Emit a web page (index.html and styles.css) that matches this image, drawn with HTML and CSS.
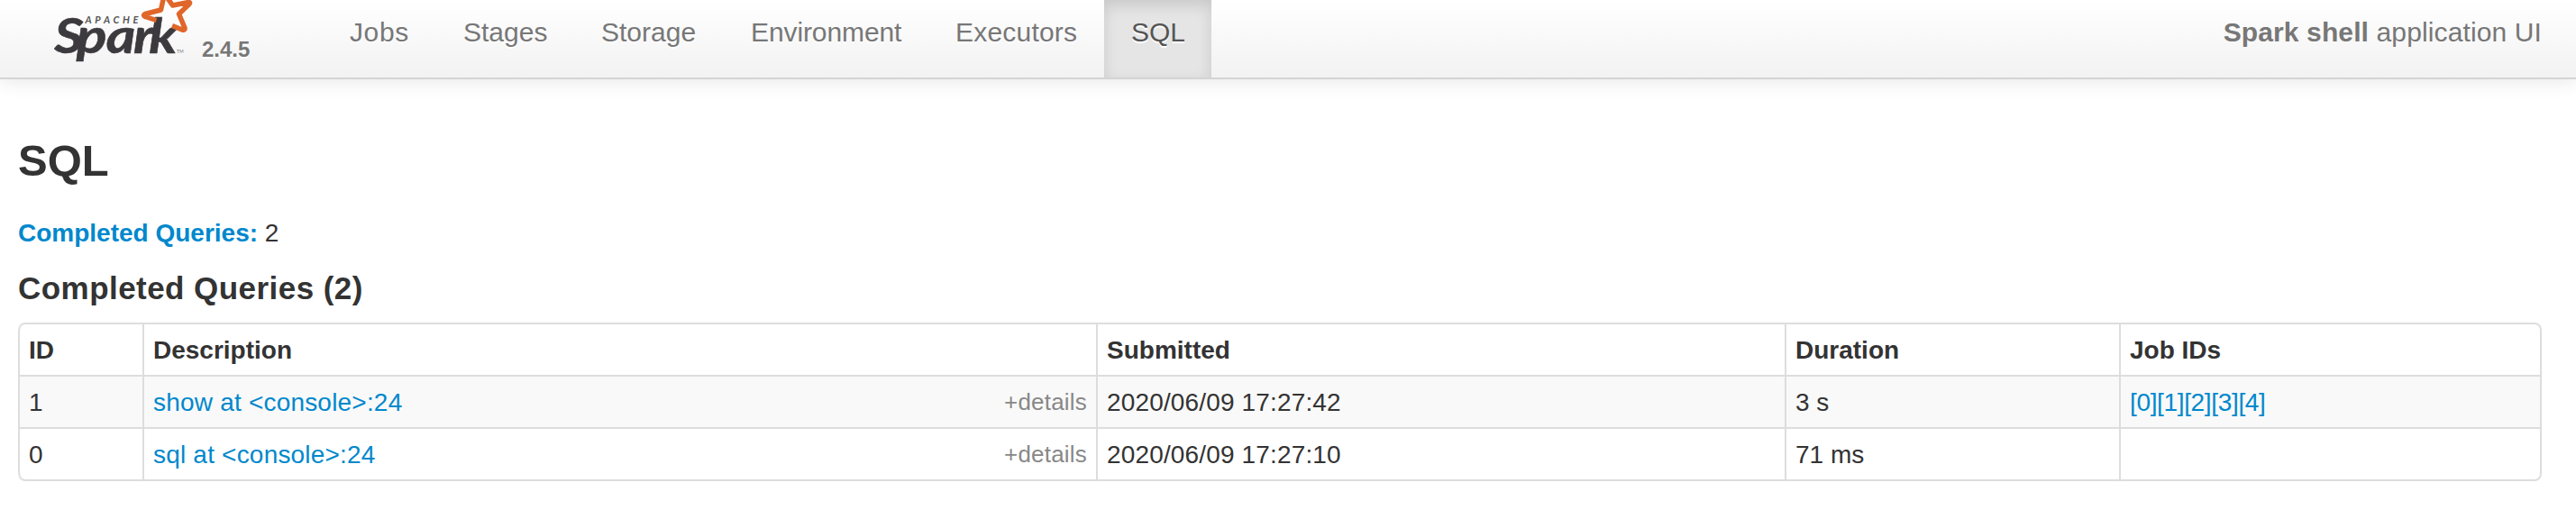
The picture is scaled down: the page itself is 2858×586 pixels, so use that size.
FILE: index.html
```html
<!DOCTYPE html>
<html lang="en">
<head>
  <meta charset="UTF-8">
  <title>Spark shell - SQL</title>
  <link rel="stylesheet" href="styles.css">
</head>
<body>
  <div class="navbar">
    <a class="brand" href="#">
      <svg class="logo" width="156" height="70" viewBox="60 0 156 70">
        <text class="logo-apache" x="94.5" y="26" textLength="59">APACHE</text>
        <text class="logo-spark" transform="scale(1.16 1)" x="52 73 101.500 127.500 142.500" y="59">Spark</text>
        <text class="logo-tm" x="196" y="58.5">TM</text>
        <path class="logo-star" d="M173.5 22.5 L161 18.500 Q158 17 161 15.500 L178.500 11 L182.500 -7 L191.500 6 L209 2.500 Q212 2.500 209.500 5 L198.500 15.500 L205 31 Q205.500 34 202 33 L191 28.500"/>
      </svg>
      <span class="version">2.4.5</span>
    </a>
    <ul class="nav">
      <li class="jobs"><a href="#">Jobs</a></li>
      <li class="stages"><a href="#">Stages</a></li>
      <li class="storage"><a href="#">Storage</a></li>
      <li class="environment"><a href="#">Environment</a></li>
      <li class="executors"><a href="#">Executors</a></li>
      <li class="sql active"><a href="#">SQL</a></li>
    </ul>
    <p class="navbar-text"><strong>Spark shell</strong> application UI</p>
  </div>

  <div class="container">
    <h3>SQL</h3>
    <p class="summary"><a href="#completed"><strong>Completed Queries:</strong></a> 2</p>
    <h4 id="completed">Completed Queries (2)</h4>
    <table class="table">
      <colgroup>
        <col class="col-id">
        <col class="col-description">
        <col class="col-submitted">
        <col class="col-duration">
        <col class="col-jobs">
      </colgroup>
      <thead>
        <tr>
          <th>ID</th>
          <th>Description</th>
          <th>Submitted</th>
          <th>Duration</th>
          <th>Job IDs</th>
        </tr>
      </thead>
      <tbody>
        <tr>
          <td>1</td>
          <td><div class="description"><a href="#">show at &lt;console&gt;:24</a><span class="details">+details</span></div></td>
          <td class="submitted">2020/06/09 17:27:42</td>
          <td>3 s</td>
          <td class="jobs-list"><a href="#">[0]</a><a href="#">[1]</a><a href="#">[2]</a><a href="#">[3]</a><a href="#">[4]</a></td>
        </tr>
        <tr>
          <td>0</td>
          <td><div class="description"><a href="#">sql at &lt;console&gt;:24</a><span class="details">+details</span></div></td>
          <td class="submitted">2020/06/09 17:27:10</td>
          <td>71 ms</td>
          <td></td>
        </tr>
      </tbody>
    </table>
  </div>
</body>
</html>
```
FILE: styles.css
```css
body {
  margin: 0;
  font-family: "Helvetica Neue", "Liberation Sans", Arial, sans-serif;
  font-size: 28px;
  line-height: 40px;
  color: #333;
  background: #fff;
}
a {
  color: #08c;
  text-decoration: none;
}
.navbar {
  display: flex;
  height: 86px;
  padding: 0 38px 0 60px;
  border-bottom: 2px solid #d4d4d4;
  background: linear-gradient(to bottom, #fff, #f2f2f2);
  box-shadow: 0 2px 20px rgba(0, 0, 0, 0.1);
  font-size: 30px;
  color: #777;
}
.brand {
  display: flex;
  width: 298px;
  color: #777;
}
.logo {
  display: block;
}
.logo-apache {
  font: italic bold 11px Lato, sans-serif;
  fill: #555;
}
.logo-spark {
  font: italic bold 54px Lato, sans-serif;
  fill: #3c3a3e;
  stroke: #3c3a3e;
  stroke-width: 0.6;
}
.logo-tm {
  font: 5px Lato, sans-serif;
  fill: #777;
}
.logo-star {
  fill: none;
  stroke: #e0662a;
  stroke-width: 5.5;
  stroke-linejoin: round;
}
.version {
  margin: 35px 0 0 8px;
  font-size: 24px;
  font-weight: bold;
  text-shadow: 0 2px 0 #fff;
}
.nav {
  display: flex;
  margin: 0;
  padding: 0;
  list-style: none;
}
.nav li {
  box-sizing: border-box;
  height: 86px;
  padding: 16px 0 0 30px;
}
.nav a {
  color: #777;
  text-shadow: 0 2px 0 #fff;
}
.nav .jobs {
  width: 126px;
  letter-spacing: 0.6px;
}
.nav .stages {
  width: 153px;
}
.nav .storage {
  width: 166px;
}
.nav .environment {
  width: 227px;
  letter-spacing: -0.1px;
}
.nav .executors {
  width: 195px;
  letter-spacing: 0.2px;
}
.nav .sql {
  width: 119px;
}
.nav .active {
  background: #e5e5e5;
  box-shadow: inset 0 6px 16px rgba(0, 0, 0, 0.125);
}
.nav .active a {
  color: #555;
}
.navbar-text {
  margin: 16px 0 0 auto;
  letter-spacing: 0.12px;
}
.container {
  padding: 60px 38px 0 20px;
}
h3 {
  margin: 0;
  font-size: 49px;
  line-height: 60px;
}
.summary {
  margin: 31px 0 0;
}
h4 {
  margin: 21px 0 0;
  font-size: 35px;
  line-height: 40px;
  letter-spacing: 0.45px;
}
.table {
  width: 2800px;
  margin-top: 18px;
  table-layout: fixed;
  border-collapse: separate;
  border-spacing: 0;
  border: 2px solid #ddd;
  border-left: 0;
  border-radius: 8px;
}
.col-id {
  width: 138px;
}
.col-description {
  width: 1058px;
}
.col-submitted {
  width: 764px;
}
.col-duration {
  width: 371px;
}
th, td {
  height: 40px;
  padding: 9px 10px 7px;
  border-left: 2px solid #ddd;
  text-align: left;
}
td {
  border-top: 2px solid #ddd;
}
tbody tr:first-child td {
  background: #f9f9f9;
}
th:first-child {
  border-top-left-radius: 8px;
}
tr:last-child td:first-child {
  border-bottom-left-radius: 8px;
}
.description {
  display: flex;
  justify-content: space-between;
  letter-spacing: 0.2px;
}
.details {
  margin-top: -1px;
  font-size: 26px;
  color: #888;
}
.submitted {
  letter-spacing: 0.15px;
}
.jobs-list {
  letter-spacing: -0.35px;
}
```
